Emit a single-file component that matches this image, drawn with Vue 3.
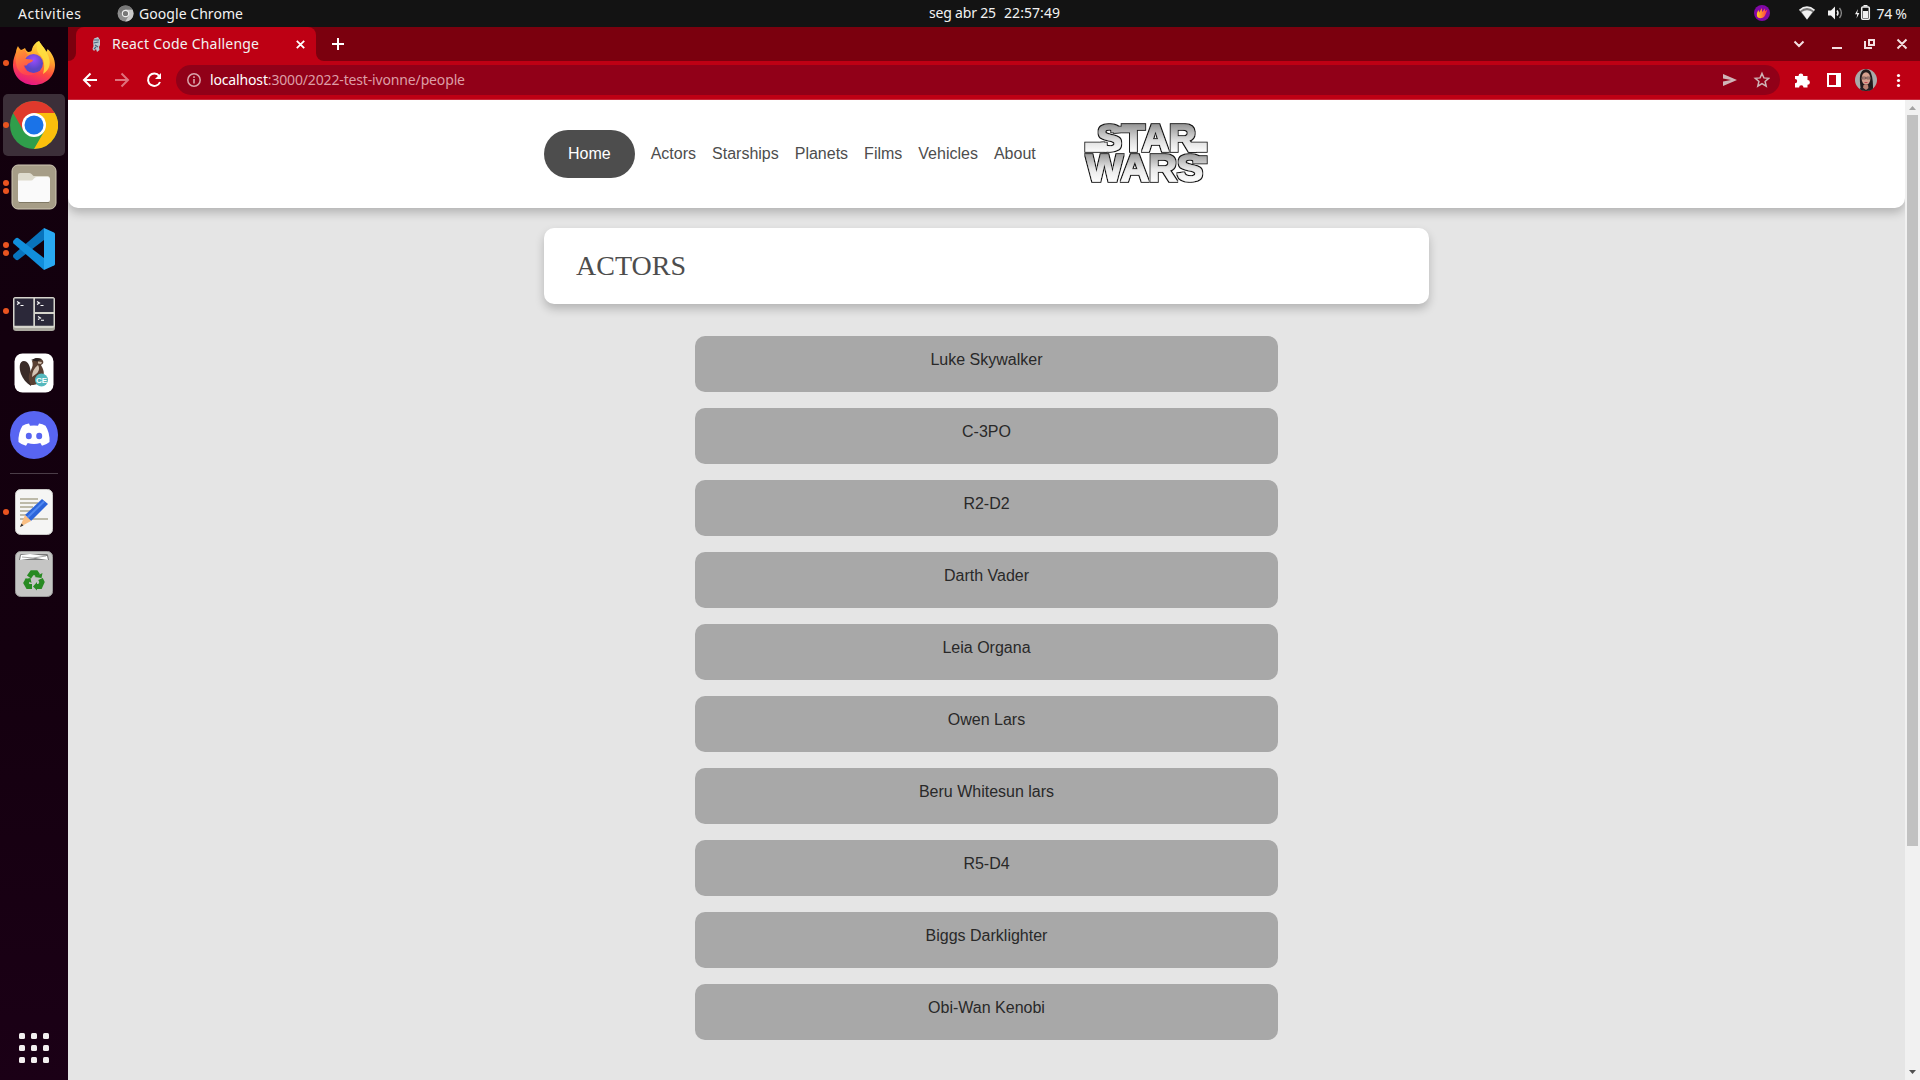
<script setup>
const links = ['Actors', 'Starships', 'Planets', 'Films', 'Vehicles', 'About']
const actors = [
  'Luke Skywalker', 'C-3PO', 'R2-D2', 'Darth Vader', 'Leia Organa',
  'Owen Lars', 'Beru Whitesun lars', 'R5-D4', 'Biggs Darklighter', 'Obi-Wan Kenobi',
]
const gridDots = [0, 12, 24]
</script>

<template>
  <div class="desktop">
    <header class="topbar">
      <svg class="label activities" width="63" height="27"><text x="0" y="18.5" textLength="63">Activities</text></svg>
      <svg class="appicon" width="17" height="17" viewBox="0 0 17 17">
        <circle cx="8.5" cy="8.5" r="8" fill="#8d8d8d" />
        <path d="M8.5 4.7H15.6A8 8 0 0 0 1.6 4.5L5 10.5z" fill="#777" />
        <path d="M11.9 10.4L8.3 16.5A8 8 0 0 0 15.6 4.8H8.5z" fill="#c9c9c9" />
        <circle cx="8.5" cy="8.5" r="3.2" fill="#777" stroke="#eee" stroke-width="1.2" />
      </svg>
      <svg class="label appname" width="104" height="27"><text x="0" y="18.5" textLength="104">Google Chrome</text></svg>
      <div class="clock">
        <svg class="label" width="53" height="27"><text x="0" y="18" textLength="67">seg abr 25</text></svg>
        <svg class="label time" width="57" height="27"><text x="0" y="18" textLength="56">22:57:49</text></svg>
      </div>
      <svg class="tray" width="166" height="27" viewBox="1754 0 166 27">
        <defs><linearGradient id="flame" x1="0" x2="1"><stop offset="0" stop-color="#ffd21c" /><stop offset="1" stop-color="#ff2b50" /></linearGradient></defs>
        <circle cx="1762" cy="13" r="8" fill="#8208a6" />
        <path d="M1757 16c-.5-3 .5-4.500 1.500-6l.7 2.500 2.600-4.500.4 4 2.700-3.500.1 2.700 2.500-1.700c-1.500 3-2 7.500-5.500 8.500-2 .4-4.500 0-5-2z" fill="url(#flame)" />
        <path d="M1799.500 10.500Q1807 4.500 1814.500 10.500L1807 19.800z" fill="#777" />
        <path d="M1799.500 10.300Q1807 3.800 1814.500 10.300" fill="none" stroke="#eee" stroke-width="1.600" />
        <path d="M1801.600 12Q1807 8.500 1812.400 12L1807 19.500z" fill="#f2f2f2" />
        <path d="M1828 10.500h3l4-4v13l-4-4h-3z" fill="#f2f2f2" />
        <path d="M1837 10.500q2 2.500 0 5" fill="none" stroke="#eee" stroke-width="1.500" />
        <path d="M1839.500 8q3.800 5 0 10" fill="none" stroke="#888" stroke-width="1.300" />
        <path d="M1858 9l-3 5.200h2.200L1856.500 18.500 1859.400 13h-2.200z" fill="#f2f2f2" />
        <rect x="1861.700" y="7" width="7.600" height="12.200" rx="1" fill="none" stroke="#f2f2f2" stroke-width="1.500" />
        <path d="M1863.500 5h4v1.500h-4zM1863 11h5v7h-5z" fill="#f2f2f2" />
        <text x="1876.500" y="18.500" textLength="30.500">74 %</text>
      </svg>
    </header>

    <div class="workspace">
      <nav class="dock">
        <div class="slot">
          <i class="running"></i>
          <svg width="44" height="46" viewBox="0 0 44 46">
            <defs>
              <linearGradient id="fx" x1=".7" y1="0" x2=".35" y2="1"><stop offset="0" stop-color="#fff14a" /><stop offset=".35" stop-color="#ffa62b" /><stop offset=".65" stop-color="#ff4a3f" /><stop offset="1" stop-color="#e3148a" /></linearGradient>
              <radialGradient id="fg" cx=".5" cy=".3"><stop offset="0" stop-color="#9a4dff" /><stop offset="1" stop-color="#5b46c4" /></radialGradient>
              <linearGradient id="fox" x1="0" y1="0" x2=".3" y2="1"><stop offset="0" stop-color="#ffa32b" /><stop offset="1" stop-color="#ff4350" /></linearGradient>
            </defs>
            <path d="M27 1c2 4 6 7 7 11 1-1 1.500-2 1.500-3C40 13 43 19 43 25c0 11-9 20-21 20S1 36 1 25C1 19 3 15 4 12c0-2 1-4 2-6 .5 2 1.500 3 3 4 2-1 3-1 4-2 .5 2 2 3 3 4 3 0 4-1 4-3 1-4 4-7 7-8z" fill="url(#fx)" />
            <path d="M27 1c2 4 6 7 8 12 5 9 3 17-4 21 2-7 2-15-4-20-3-3-3-9 0-13z" fill="#ffe141" opacity=".85" />
            <circle cx="21.500" cy="23.500" r="9.500" fill="url(#fg)" />
            <path d="M5 13c1-1 1-4 1.500-6 1 2 2 3 3 4 1-1 2.500-1.500 3.500-2 0 2 1 4 3 6-2 1-3 2-3.500 3.500 2 1 6 .5 8.500 1.500 0 2.500-5 2.500-6 5-1 1-2.500.5-3.500 0 1 6 6 9 12 8-8 5-17 1-19-7-1-5-1-9 .5-13z" fill="url(#fox)" />
          </svg>
        </div>
        <div class="slot active">
          <i class="running"></i>
          <svg width="48" height="48" viewBox="0 0 48 48">
            <circle cx="24" cy="24" r="24" fill="#2f9e4b" />
            <path d="M24 12H44.800A24 24 0 0 0 3.200 12L13.600 30z" fill="#e0392c" />
            <path d="M24 12H44.800A24 24 0 0 1 24 48L34.400 30z" fill="#fbbf0c" />
            <circle cx="24" cy="24" r="12" fill="#fff" /><circle cx="24" cy="24" r="9.500" fill="#1a73e8" />
          </svg>
        </div>
        <div class="slot">
          <i class="running upper"></i><i class="running lower"></i>
          <svg width="46" height="46" viewBox="0 0 46 46">
            <rect x="1" y="1" width="44" height="44" rx="6" fill="#a69d87" stroke="#d0c8b4" />
            <path d="M7 20v-9q0-2 2-2h9q1.500 0 2.500 1l2 2h14q2 0 2 2v6z" fill="#dedbcd" />
            <path d="M7 16.500h13q1.500 0 2.500-1.500l1-1q1-1 2.500-1h11q2 0 2 2v21q0 2-2 2H9q-2 0-2-2z" fill="#fafafa" />
            <path d="M8 38.500h30" stroke="#807965" />
          </svg>
        </div>
        <div class="slot">
          <i class="running upper"></i><i class="running lower"></i>
          <svg width="42" height="42" viewBox="0 0 42 42">
            <path d="M31 0v12L5 32q-1.500.5-2.500-.5L.5 29.500q-1-1.500 0-3z" fill="#0873bd" />
            <path d="M.5 15.500q-1-1.500 0-3L2.500 10.500q1-1 2.500-.5L31 30v12z" fill="#118fdc" />
            <path d="M31 0L41 4.500q1 .5 1 1.500v30q0 1-1 1.500L31 42z" fill="#29a9f2" />
          </svg>
        </div>
        <div class="slot">
          <i class="running"></i>
          <svg class="terminal" width="42" height="34" viewBox="0 0 42 34">
            <rect y="0" width="42" height="34" rx="3" fill="#aaa89f" /><rect width="42" height="31" rx="3" fill="#d5d4cc" />
            <path d="M1.500 1.500H20.300V28.800H1.500zM22 1.500H40.500V15H22zM22 17H40.500V28.800H22z" fill="#2b2839" />
            <path d="M4 4.500l2.500 1.500L4 7.500M7.500 8.500h3M24 4.500l2.500 1.500-2.500 1.500M27.500 8.500h3M25 19.500l2.500 1.500-2.500 1.500M28 23.300h3" fill="none" stroke="#fff" stroke-width="1.100" />
          </svg>
        </div>
        <div class="slot">
          <svg width="40" height="40" viewBox="0 0 40 40">
            <rect x=".5" y=".5" width="39" height="39" rx="8" fill="#fff" />
            <path d="M10 8c-5 0-5 7-3 13 2 5 5 9 10 12l1-6c-2-5-1-8-2-12-1-4-3-7-6-7z" fill="#3a2c28" />
            <path d="M18 8c3-4 8-3.500 10.500-1 1.500 2 1 4-1.500 5 2 4 4 7 2 12-2 6-5 8-12 8-3-5-3-10 0-15 2-4 2-6 1-9z" fill="#5a4033" />
            <path d="M24 12c2 3 1 7-2 9l-4 3c0-5 2-9 6-12z" fill="#d5c4b4" /><path d="M17 7l5-2 6 1-5 2.500z" fill="#2c2322" /><path d="M24 8.500l4 .5-1 2-3-.5z" fill="#cbb8a6" />
            <circle cx="27.500" cy="27" r="6.500" fill="#55b8bd" /><text class="ce" x="27.500" y="30">CE</text>
          </svg>
        </div>
        <div class="slot">
          <svg width="48" height="48" viewBox="0 0 48 48">
            <circle cx="24" cy="24" r="24" fill="#5865f2" />
            <path d="M19 12.500l1 2.200q4-.6 8 0l1-2.200q3.500.6 6.500 2.200 4.500 7 4 16.300-3.500 3-7.500 3.800l-1.700-2.800q-6.300 2-12.600 0L16 34.800Q12 34 8.500 31q-.5-9.300 4-16.300 3-1.600 6.500-2.200z" fill="#fff" />
            <ellipse cx="18.800" cy="25" rx="3" ry="3.300" fill="#5865f2" /><ellipse cx="29.200" cy="25" rx="3" ry="3.300" fill="#5865f2" />
          </svg>
        </div>
        <hr class="divider" />
        <div class="slot">
          <i class="running"></i>
          <svg width="38" height="46" viewBox="0 0 38 46">
            <rect x=".5" y=".5" width="37" height="45" rx="5" fill="#f5f5f4" stroke="#c9c9c7" />
            <path d="M5 10h18M5 14h18M5 18h13M5 22h13M5 26h10M5 30h28" stroke="#bdbaa9" stroke-width="1.800" />
            <path d="M27 10l6 5-17 17-6-6z" fill="#2c65da" /><path d="M29 12.500L12 29" stroke="#5188f0" stroke-width="2" />
            <path d="M10 26l6 6-11 6z" fill="#f9bf84" /><path d="M6.500 34.500l2 2L5 38z" fill="#333" />
          </svg>
        </div>
        <div class="slot">
          <svg width="38" height="46" viewBox="0 0 38 46">
            <rect x=".5" y=".5" width="37" height="45" rx="5" fill="#c5c5c4" stroke="#999" />
            <path d="M4 9l1-5q.3-1 1.500-1h25q1.200 0 1.500 1l1 5z" fill="#777" /><path d="M5 9l1-5 9-1 17 2 1 4-13-2z" fill="#fff" /><path d="M7 6l11 1 13-2" stroke="#aaa" fill="none" />
            <g fill="none" stroke="#288a22" stroke-width="5">
              <path d="M14 26l3-4.300h4l2 3" /><path d="M25.500 28l1.500 3-2 4.500h-4" /><path d="M17 35.500h-4l-2-3.500 2-3.500" />
            </g>
            <path d="M19.500 26l7 1 1-5zM22 31v8.500l-4-4zM9.500 28l6-1 1 5z" fill="#288a22" />
          </svg>
        </div>
        <svg class="apps" width="30" height="30" viewBox="0 0 30 30">
          <template v-for="y in gridDots" :key="y"><rect v-for="x in gridDots" :key="x" :x="x" :y="y" width="6" height="6" rx="1.500" fill="#f3efef" /></template>
        </svg>
      </nav>

      <section class="browser">
        <div class="tabstrip">
          <div class="lead"></div>
          <div class="tab">
            <svg width="10" height="15" viewBox="0 0 10 15">
              <path d="M3 1.500l4-1.500 2 3v5l-1 2 .500 3-2.500 2-1-3-2 2-1.500-2 1-3-.5-4z" fill="#bac6cf" /><path d="M3 3h5M2.500 6l5-1M4 8l3 2M5 10l-2 2" stroke="#4a667d" stroke-width="1.200" />
            </svg>
            <svg class="label title" width="148" height="34"><text x="0" y="21.500" textLength="147">React Code Challenge</text></svg>
            <svg class="close" width="9" height="9" viewBox="0 0 9 9"><path d="M.8.8l7.400 7.400M8.200.8L.8 8.200" stroke="#fff" stroke-width="1.800" /></svg>
          </div>
          <div class="tail">
            <svg width="12" height="12" viewBox="0 0 12 12"><path d="M6 0v12M0 6h12" stroke="#fff" stroke-width="2" /></svg>
            <svg class="windowctl" width="130" height="34" viewBox="1790 27 130 34" fill="none" stroke="#f4dfe1" stroke-width="2">
              <path d="M1794.500 41.500l4.500 4.500 4.500-4.500M1832 48h10M1869 40h5v5h-5zM1865 41v7h7M1897.500 39.500l9 9M1906.500 39.500l-9 9" />
            </svg>
          </div>
        </div>

        <div class="toolbar">
          <svg class="navicons" width="108" height="38" viewBox="68 61 108 38" fill="none" stroke="#fff" stroke-width="2">
            <path d="M97 80H84.500M90.500 73.500L84 80l6.500 6.500" />
            <path d="M115 80h12.500M121.500 73.500L128 80l-6.500 6.500" stroke="#df727d" />
            <path d="M159.200 76A6.200 6.200 0 1 0 160 82" /><path d="M161 73v6h-6z" fill="#fff" stroke="none" />
          </svg>
          <div class="omnibox">
            <svg width="14" height="14" viewBox="0 0 14 14"><circle cx="7" cy="7" r="6.200" fill="none" stroke="#d9a3aa" stroke-width="1.500" /><path d="M7 6v4.500M7 3.300v1.600" stroke="#d9a3aa" stroke-width="1.600" /></svg>
            <svg class="label url" width="256" height="30"><text x="0" y="20" textLength="255"><tspan class="host">localhost</tspan>:3000/2022-test-ivonne/people</text></svg>
            <svg class="boxicons" width="50" height="30" viewBox="1720 65 50 30">
              <path d="M1723 74l14 6-14 6v-4.500l8-1.500-8-1.500z" fill="#cfb5b8" />
              <path d="M1762 73.500l1.900 4.400 4.800.4-3.600 3.100 1.100 4.700-4.200-2.500-4.200 2.500 1.100-4.700-3.600-3.100 4.800-.4z" fill="none" stroke="#cfb5b8" stroke-width="1.500" />
            </svg>
          </div>
          <svg class="actions" width="124" height="38" viewBox="1790 61 124 38">
            <path d="M1795 76h3.500a2.400 2.400 0 1 1 4.800 0h4.200v4a2.400 2.400 0 1 1 0 4.800v2.700h-4a2.200 2.200 0 0 0-4.400 0H1795v-4.200a2.200 2.200 0 0 0 0-4.400z" fill="#fff" />
            <path d="M1827 73h14v14h-14zM1829 75v10h7v-10z" fill="#fff" fill-rule="evenodd" />
            <clipPath id="face"><circle cx="1866" cy="80" r="11" /></clipPath>
            <g clip-path="url(#face)">
              <path d="M1855 69h22v22h-22z" fill="#a9aaa9" /><path d="M1861 91c-1-8-2-14 0-18 2-5 8-5 10 0 2 5 2 11 2 18z" fill="#211a1b" />
              <ellipse cx="1866" cy="78.500" rx="4.400" ry="6.300" fill="#d5a18f" /><path d="M1862 77h3.500v2h-3.500zM1866.700 77h3.500v2h-3.500z" fill="#b98e80" stroke="#55403f" stroke-width=".6" />
              <path d="M1864.500 82.500h3" stroke="#be4653" /><path d="M1862.500 91l1-6h4.500l1 6z" fill="#bc8272" /><path d="M1857 91l5-4 4 3 4-3 5 4z" fill="#242125" />
            </g>
            <circle cx="1898.500" cy="75.500" r="1.600" fill="#fff" /><circle cx="1898.500" cy="80.500" r="1.600" fill="#fff" /><circle cx="1898.500" cy="85.500" r="1.600" fill="#fff" />
          </svg>
        </div>

        <div class="viewport">
          <main class="page">
            <header class="masthead">
              <div class="inner">
                <a class="home">Home</a>
                <a v-for="link in links" :key="link" class="link">{{ link }}</a>
                <svg class="logo" width="126" height="62" viewBox="1083 123 126 62">
                  <defs>
                    <linearGradient id="steel" x1="0" y1="125" x2="0" y2="153" gradientUnits="userSpaceOnUse"><stop offset="0" stop-color="#999" /><stop offset=".55" stop-color="#dedede" /><stop offset="1" stop-color="#fff" /></linearGradient>
                    <linearGradient id="steel2" x1="0" y1="155" x2="0" y2="183" gradientUnits="userSpaceOnUse"><stop offset="0" stop-color="#a2a2a2" /><stop offset=".5" stop-color="#e8e8e8" /><stop offset="1" stop-color="#fff" /></linearGradient>
                    <filter id="outline" x="-10%" y="-20%" width="120%" height="140%">
                      <feMorphology in="SourceAlpha" operator="dilate" radius="1.2" result="grown" />
                      <feGaussianBlur in="grown" stdDeviation=".4" result="soft" />
                      <feFlood flood-color="#151515" /><feComposite in2="soft" operator="in" result="line" />
                      <feMerge><feMergeNode in="line" /><feMergeNode in="SourceGraphic" /></feMerge>
                    </filter>
                  </defs>
                  <g class="wordmark" fill="url(#steel)" stroke="url(#steel)" filter="url(#outline)">
                    <path d="M1086 143.500h20v7.500h-20zM1190 143.500h16v7.500h-16zM1112 127.500h20v4h-20z" />
                    <text x="1097" y="151.300" textLength="99" lengthAdjust="spacingAndGlyphs">STAR</text>
                  </g>
                  <g class="wordmark" fill="url(#steel2)" stroke="url(#steel2)" filter="url(#outline)">
                    <path d="M1194 157h12v5.500h-12z" />
                    <text x="1086" y="181" textLength="117" lengthAdjust="spacingAndGlyphs">WARS</text>
                  </g>
                </svg>
              </div>
            </header>
            <h1 class="heading">ACTORS</h1>
            <ul class="people"><li v-for="name in actors" :key="name">{{ name }}</li></ul>
          </main>
          <aside class="scrollbar">
            <svg width="15" height="15" viewBox="0 0 15 15"><path d="M4 10l3.500-4L11 10z" fill="#a3a3a3" /></svg>
            <div class="thumb"></div>
            <svg class="down" width="15" height="15" viewBox="0 0 15 15"><path d="M4 5h7L7.500 9z" fill="#505050" /></svg>
          </aside>
        </div>
      </section>
    </div>
  </div>
</template>

<style>
body { margin: 0; overflow: hidden; }
</style>

<style scoped>
.desktop { width: 1920px; height: 1080px; display: flex; flex-direction: column; overflow: hidden; font-family: "Liberation Sans", Arial, sans-serif; }
svg { display: block; flex: none; }
.label, .tray { font: 14px "Noto Sans", sans-serif; fill: #f2f2f2; overflow: visible; }
.topbar { height: 27px; flex: none; background: #131313; display: flex; align-items: center; }
.activities { margin-left: 18px; }
.appicon { margin-left: 35.500px; }
.appname { margin-left: 5px; }
.clock { display: flex; margin-left: 686px; }
.time { margin-left: 22px; }
.tray { margin-left: auto; }
.workspace { flex: 1; min-height: 0; display: flex; }
.dock { width: 68px; flex: none; box-sizing: border-box; padding: 5px 3px 17px; background: linear-gradient(#12000d, #14000f 60%, #1b0016); display: flex; flex-direction: column; align-items: center; }
.slot { position: relative; width: 62px; height: 62px; flex: none; display: flex; align-items: center; justify-content: center; border-radius: 5px; }
.slot.active { background: #3c2f39; }
.running { position: absolute; left: 0; top: 28px; width: 6px; height: 6px; border-radius: 50%; background: #e95420; }
.running.upper { top: 24px; }
.running.lower { top: 32px; }
.terminal { margin-top: 6px; }
.divider { width: 48px; height: 1px; margin: 7px 0; border: 0; background: #4b3d48; flex: none; }
.apps { margin-top: auto; }
.ce { font: bold 8px "Liberation Sans", sans-serif; fill: #fff; text-anchor: middle; }
.browser { flex: 1; min-width: 0; display: flex; flex-direction: column; background: #be0014; }
.tabstrip { height: 34px; flex: none; display: flex; background: linear-gradient(#7b000e 50%, #be0014 50%); }
.lead { width: 8px; background: #7b000e; border-bottom-right-radius: 8px; }
.tab { width: 240px; box-sizing: border-box; padding: 0 11px 0 15px; display: flex; align-items: center; background: #be0014; border-radius: 8px 8px 0 0; }
.title { margin-left: 11px; }
.close { margin-left: auto; }
.tail { flex: 1; display: flex; align-items: center; padding-left: 16px; background: #7b000e; border-bottom-left-radius: 8px; }
.windowctl { margin-left: auto; }
.toolbar { height: 38px; flex: none; display: flex; align-items: center; border-bottom: 1px solid #c92a3c; }
.omnibox { width: 1604px; height: 30px; box-sizing: border-box; border-radius: 15px; background: #910018; display: flex; align-items: center; padding: 0 10px 0 11px; }
.url { margin-left: 9px; fill: #dd9ea6; }
.host { fill: #fff; }
.boxicons { margin-left: auto; }
.actions { margin-left: 10px; }
.viewport { flex: 1; min-height: 0; display: flex; background: #e5e5e5; }
.page { flex: 1; overflow: hidden; }
.masthead { height: 108px; background: #fff; border-radius: 0 0 10px 10px; box-shadow: 0 5px 10px rgba(0,0,0,.21); }
.inner { width: 885px; height: 100%; margin: 0 auto; display: flex; align-items: center; gap: 16px; color: #4d4d4d; font-size: 16px; }
.home { box-sizing: border-box; width: 90.700px; height: 48px; line-height: 47px; text-align: center; border-radius: 24px; background: #4d4d4d; color: #fff; }
.logo { margin-left: 31px; overflow: visible; }
.wordmark { stroke-width: 1.300; font: bold 36.500px "Liberation Sans", sans-serif; }
.heading { width: 885px; height: 76px; box-sizing: border-box; margin: 20px auto 32px; padding-left: 32px; border-radius: 10px; background: #fff; box-shadow: 0 5px 10px rgba(0,0,0,.21); color: #4d4d4d; font: 400 28px/76px "Liberation Serif", "Times New Roman", serif; }
.people { width: 583px; margin: 0 auto; padding: 0; list-style: none; display: flex; flex-direction: column; gap: 16px; }
.people li { height: 56px; box-sizing: border-box; padding-top: 15px; border-radius: 10px; background: #a8a8a8; color: #292929; text-align: center; font-size: 16px; line-height: 18px; }
.scrollbar { width: 15px; flex: none; background: #f1f1f1; display: flex; flex-direction: column; align-items: center; }
.thumb { width: 11px; height: 731px; background: #c1c1c1; }
.down { margin-top: auto; }
</style>
